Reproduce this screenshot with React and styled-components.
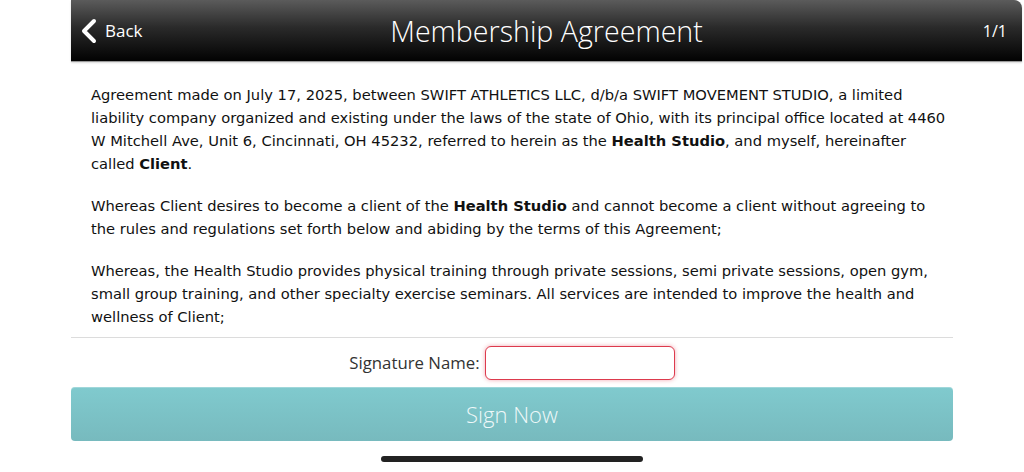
import styled, { createGlobalStyle } from 'styled-components';

const GlobalStyle = createGlobalStyle`
  html, body {
    margin: 0;
    padding: 0;
    background: #fff;
  }

  * {
    box-sizing: border-box;
  }
`;

const Page = styled.div`
  width: 1024px;
  height: 472px;
  display: flex;
  flex-direction: column;
  padding-left: 71px;
  overflow: hidden;
  font-family: 'Open Sans', 'Liberation Sans', sans-serif;
`;

const Header = styled.header`
  width: 951px;
  height: 62px;
  flex-shrink: 0;
  display: grid;
  grid-template-columns: 1fr auto 1fr;
  align-items: center;
  padding: 0 15px;
  color: #fff;
  background: linear-gradient(to bottom, #5b5b5b 0%, #2a2a2a 45%, #020202 100%);
  border-top-right-radius: 8px;
  border-bottom: 1px solid #9a9a9a;
  box-shadow: 0 1px 2px rgba(0, 0, 0, 0.15);
`;

const BackButton = styled.button`
  justify-self: start;
  display: flex;
  align-items: center;
  gap: 7px;
  margin-left: -6px;
  padding: 0;
  border: none;
  background: none;
  color: #fff;
  font-family: inherit;
  font-size: 17px;
  cursor: pointer;

  svg {
    display: block;
  }
`;

const Title = styled.h1`
  margin: 0;
  font-size: 28.6px;
  font-weight: 300;
`;

const PageCount = styled.span`
  justify-self: end;
  font-size: 16px;
  font-weight: 400;
  margin-top: 1px;
`;

const Content = styled.div`
  width: 882px;
  display: flex;
  flex-direction: column;
`;

const Agreement = styled.article`
  padding: 21px 0 9px 20px;
  border-bottom: 1px solid #dcdcdc;
  font-family: 'DejaVu Sans', Verdana, sans-serif;
  font-size: 14.7px;
  line-height: 23px;
  color: #111;

  p {
    margin: 0 0 19px;
    white-space: nowrap;
  }

  p:last-child {
    margin-bottom: 0;
  }

  strong {
    font-weight: 700;
  }
`;

const SignatureRow = styled.div`
  height: 49px;
  display: flex;
  align-items: center;
  justify-content: center;
  gap: 5px;
`;

const Label = styled.label`
  font-size: 16.8px;
  color: #333;
`;

const NameInput = styled.input`
  width: 190px;
  height: 34px;
  border: 1px solid #dd3a4d;
  border-radius: 6px;
  box-shadow: 0 0 4px rgba(221, 58, 77, 0.45);
  outline: none;
  padding: 0 8px;
  font-family: inherit;
  font-size: 15px;
`;

const SignButton = styled.button`
  height: 54px;
  border: none;
  border-radius: 4px;
  background: linear-gradient(to bottom, #80cace 0%, #77babe 100%);
  box-shadow: inset 0 1px 0 rgba(255, 255, 255, 0.25);
  color: #eef8f9;
  font-family: 'Open Sans', sans-serif;
  font-size: 22px;
  font-weight: 300;
  cursor: pointer;
`;

const HomeIndicator = styled.div`
  width: 262px;
  height: 6px;
  margin: 15px 0 0 310px;
  border-radius: 3px;
  background: #222;
`;

function Chevron() {
  return (
    <svg width="18" height="26" viewBox="0 0 18 26" fill="none">
      <path d="M14 3 L4 13 L14 23" stroke="#fff" strokeWidth="4" strokeLinecap="round" strokeLinejoin="round" />
    </svg>
  );
}

export default function App() {
  return (
    <Page>
      <GlobalStyle />
      <Header>
        <BackButton>
          <Chevron />
          Back
        </BackButton>
        <Title>Membership Agreement</Title>
        <PageCount>1/1</PageCount>
      </Header>
      <Content>
        <Agreement>
          <p>
            Agreement made on July 17, 2025, between SWIFT ATHLETICS LLC, d/b/a SWIFT MOVEMENT STUDIO, a limited
            <br />
            liability company organized and existing under the laws of the state of Ohio, with its principal office located at 4460
            <br />
            W Mitchell Ave, Unit 6, Cincinnati, OH 45232, referred to herein as the <strong>Health Studio</strong>, and
            myself, hereinafter
            <br />
            called <strong>Client</strong>.
          </p>
          <p>
            Whereas Client desires to become a client of the <strong>Health Studio</strong> and cannot become a client
            without agreeing to
            <br />
            the rules and regulations set forth below and abiding by the terms of this Agreement;
          </p>
          <p>
            Whereas, the Health Studio provides physical training through private sessions, semi private sessions,
            open gym,
            <br />
            small group training, and other specialty exercise seminars. All services are intended to improve the
            health and
            <br />
            wellness of Client;
          </p>
        </Agreement>
        <SignatureRow>
          <Label htmlFor="signature">Signature Name:</Label>
          <NameInput id="signature" type="text" />
        </SignatureRow>
        <SignButton>Sign Now</SignButton>
      </Content>
      <HomeIndicator />
    </Page>
  );
}
